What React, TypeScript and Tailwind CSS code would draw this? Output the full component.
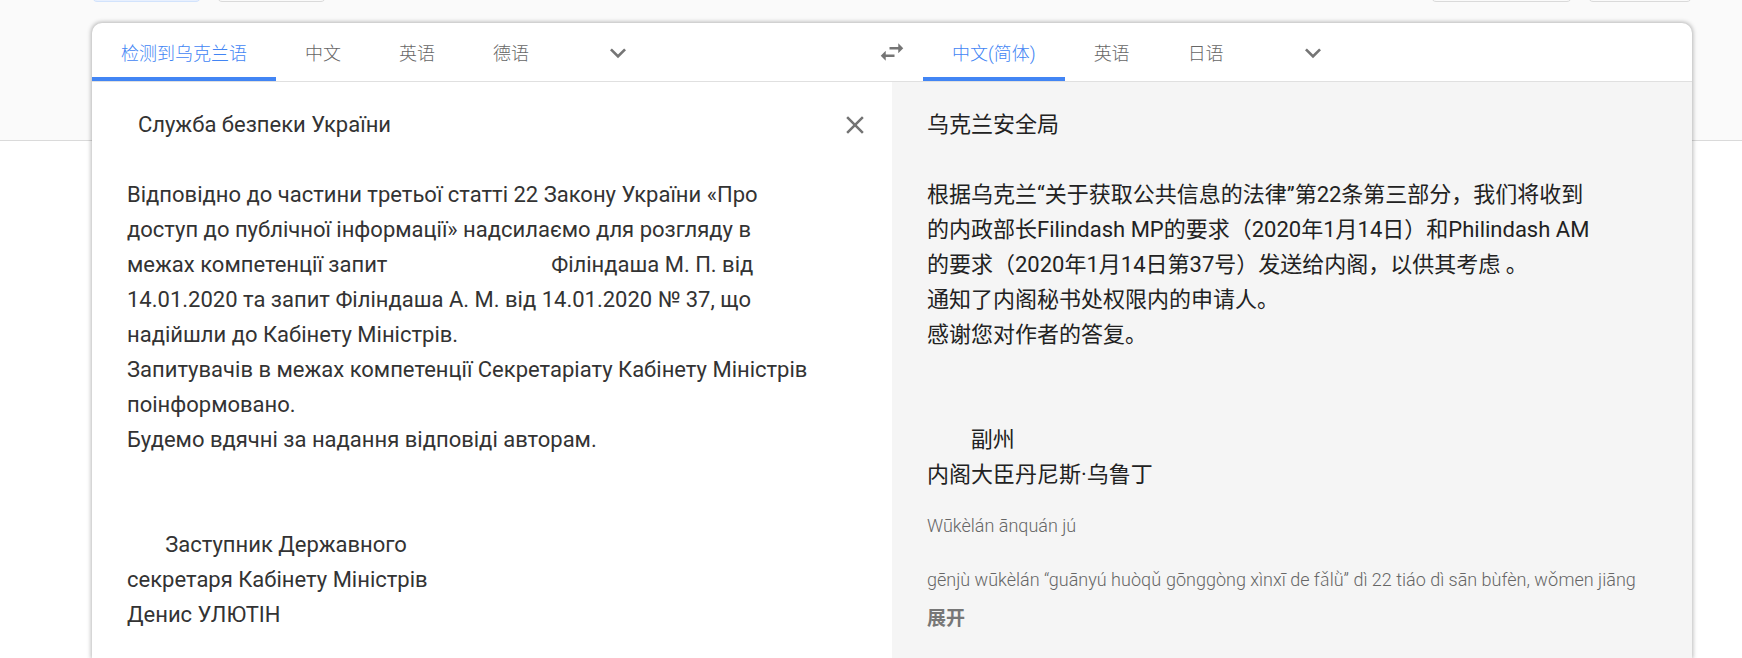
import { useState } from 'react';

const SOURCE_TEXT = [
  '  Служба безпеки України',
  '',
  'Відповідно до частини третьої статті 22 Закону України «Про',
  'доступ до публічної інформації» надсилаємо для розгляду в',
  'межах компетенції запит' + ' '.repeat(30) + 'Філіндаша М. П. від',
  '14.01.2020 та запит Філіндаша А. М. від 14.01.2020 № 37, що',
  'надійшли до Кабінету Міністрів.',
  'Запитувачів в межах компетенції Секретаріату Кабінету Міністрів',
  'поінформовано.',
  'Будемо вдячні за надання відповіді авторам.',
  '',
  '',
  '       Заступник Державного',
  'секретаря Кабінету Міністрів',
  'Денис УЛЮТІН',
].join('\n');

const TRANSLATION = [
  '乌克兰安全局',
  '',
  '根据乌克兰“关于获取公共信息的法律”第22条第三部分，我们将收到',
  '的内政部长Filindash MP的要求（2020年1月14日）和Philindash AM',
  '的要求（2020年1月14日第37号）发送给内阁，以供其考虑 。',
  '通知了内阁秘书处权限内的申请人。',
  '感谢您对作者的答复。',
  '',
  '',
  '        副州',
  '内阁大臣丹尼斯·乌鲁丁',
].join('\n');

const ROMANIZATION = [
  'Wūkèlán ānquán jú',
  '',
  'gēnjù wūkèlán “guānyú huòqǔ gōnggòng xìnxī de fǎlǜ” dì 22 tiáo dì sān bùfèn, wǒmen jiāng',
].join('\n');

function LanguageTabs({ label, languages }: { label: string; languages: string[] }) {
  const [selected, setSelected] = useState(languages[0]);
  return (
    <div className="flex h-full">
      <div role="tablist" aria-label={label} className="flex h-full">
        {languages.map((language) => (
          <button
            key={language}
            type="button"
            role="tab"
            aria-selected={language === selected}
            onClick={() => setSelected(language)}
            className={
              language === selected
                ? 'border-b-4 border-[#4285f4] px-[29px] pt-1.5 text-[#4285f4]'
                : 'border-b-4 border-transparent px-[29px] pt-1.5 text-[#666]'
            }
          >
            {language}
          </button>
        ))}
      </div>
      <button type="button" aria-label="更多语言" className="flex w-[120px] items-center justify-center">
        <svg viewBox="0 0 24 24" className="mt-1 size-8" fill="#757575" aria-hidden="true">
          <path d="M7.41 7.84 12 12.42l4.59-4.58L18 9.25l-6 6-6-6z" />
        </svg>
      </button>
    </div>
  );
}

export default function App() {
  const [source, setSource] = useState(SOURCE_TEXT);

  return (
    <div className="flex min-h-screen flex-col bg-white font-[Roboto,'Noto_Sans_CJK_SC',sans-serif]">
      <header className="h-[141px] shrink-0 border-b border-[#dadada] bg-[#fafafa] pr-[50px] pl-[92px]">
        <div className="-mt-[38px] flex justify-between">
          <div className="flex gap-4">
            <button type="button" aria-label="文字" className="h-10 w-[109px] rounded-[5px] border border-[#d2e3fc] bg-[#e8f0fe]" />
            <button type="button" aria-label="文档" className="h-10 w-[109px] rounded-[5px] border border-[#dadada]" />
          </div>
          <div className="flex gap-4">
            <button type="button" aria-label="登录" className="h-10 w-[141px] rounded-[5px] border border-[#dadada]" />
            <button type="button" aria-label="设置" className="h-10 w-[104px] rounded-[5px] border border-[#dadada]" />
          </div>
        </div>
      </header>

      <main className="-mt-[118px] mr-[50px] ml-[92px] flex grow flex-col overflow-hidden rounded-t-[10px] bg-white shadow-[0_0_4px_1px_rgba(0,0,0,0.28)]">
        <div className="grid h-[59px] grid-cols-2 border-b border-[#e0e0e0] text-[18px] font-light">
          <LanguageTabs label="源语言" languages={['检测到乌克兰语', '中文', '英语', '德语']} />
          <div className="flex">
            <button type="button" aria-label="切换语言" className="-ml-[15px] flex w-[46px] items-center">
              <svg viewBox="0 0 24 24" className="size-[30px]" fill="#757575" aria-hidden="true">
                <path d="M6.99 11 3 15l3.99 4v-3H14v-2H6.99v-3zM21 9l-3.99-4v3H10v2h7.01v3L21 9z" />
              </svg>
            </button>
            <LanguageTabs label="目标语言" languages={['中文(简体)', '英语', '日语']} />
          </div>
        </div>

        <div className="grid grow grid-cols-2">
          <section className="flex items-start">
            <textarea
              aria-label="原文"
              value={source}
              onChange={(event) => setSource(event.target.value)}
              rows={15}
              wrap="off"
              spellCheck={false}
              className="block min-w-0 grow resize-none overflow-hidden bg-transparent pt-[25px] pl-[35px] text-[22px] leading-[35px] text-[#333] outline-none"
            />
            <button type="button" aria-label="清除" onClick={() => setSource('')} className="mt-[28px] mr-[22px] shrink-0">
              <svg viewBox="0 0 24 24" className="size-[30px]" fill="#757575" aria-hidden="true">
                <path d="M19 6.41 17.59 5 12 10.59 6.41 5 5 6.41 10.59 12 5 17.59 6.41 19 12 13.41 17.59 19 19 17.59 13.41 12z" />
              </svg>
            </button>
          </section>

          <section className="bg-[#f5f5f5] pt-[25px] pl-[35px]">
            <p className="text-[22px] leading-[35px] whitespace-pre text-[#222]">{TRANSLATION}</p>
            <p className="mt-5 text-[18px] leading-[27px] font-light whitespace-pre text-[#666]">{ROMANIZATION}</p>
            <button type="button" className="mt-3 text-[19px] leading-[27px] font-bold text-[#777]">
              展开
            </button>
          </section>
        </div>
      </main>
    </div>
  );
}
